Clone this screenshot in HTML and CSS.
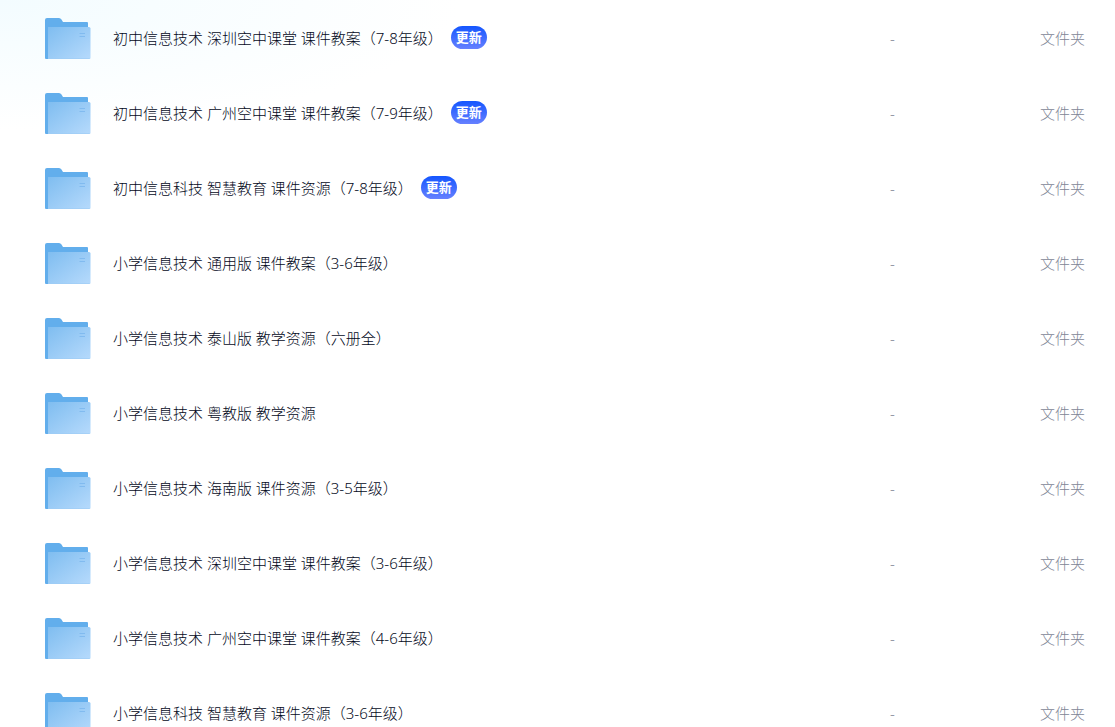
FILE: index.html
```html
<!DOCTYPE html>
<html lang="zh-CN">
<head>
    <meta charset="UTF-8">
    <meta name="viewport" content="width=device-width, initial-scale=1.0">
    <title>信息技术课件资源</title>
    <link rel="stylesheet" href="styles.css">
</head>
<body>
    <!-- shared folder icon -->
    <svg class="defs" width="0" height="0" aria-hidden="true">
        <defs>
            <linearGradient id="front" x1="0" y1="0" x2="1" y2="1">
                <stop offset="0" stop-color="#7fbdf0"/>
                <stop offset="1" stop-color="#b6dafc"/>
            </linearGradient>
        </defs>
        <symbol id="folder" viewBox="0 0 46 41">
            <path fill="#62aeec" d="M0 2Q0 0 2 0H14Q15.500 0 16.500 1.500L18 4H42Q43 4 43 5V41H1Q0 41 0 40Z"/>
            <path fill="url(#front)" d="M3 9H44Q45.500 9 45.500 10.500V39.500Q45.500 41 44 41H3Z"/>
            <path fill="#9ccbf5" fill-opacity=".6" d="M3 40H45.400Q45 41 44 41H3Z"/>
            <path stroke="#7ab7ee" stroke-opacity=".8" d="M34.500 15.500H40M34.500 18.500H40"/>
        </symbol>
    </svg>

    <table class="file-list">
        <colgroup>
            <col>
            <col class="col-size">
            <col class="col-type">
        </colgroup>
        <tbody>
            <tr>
                <td><div class="file"><svg class="icon"><use href="#folder"/></svg><a class="name" href="#">初中信息技术 深圳空中课堂 课件教案（7-8年级）</a><span class="badge">更新</span></div></td>
                <td>-</td>
                <td>文件夹</td>
            </tr>
            <tr>
                <td><div class="file"><svg class="icon"><use href="#folder"/></svg><a class="name" href="#">初中信息技术 广州空中课堂 课件教案（7-9年级）</a><span class="badge">更新</span></div></td>
                <td>-</td>
                <td>文件夹</td>
            </tr>
            <tr>
                <td><div class="file"><svg class="icon"><use href="#folder"/></svg><a class="name" href="#">初中信息科技 智慧教育 课件资源（7-8年级）</a><span class="badge">更新</span></div></td>
                <td>-</td>
                <td>文件夹</td>
            </tr>
            <tr>
                <td><div class="file"><svg class="icon"><use href="#folder"/></svg><a class="name" href="#">小学信息技术 通用版 课件教案（3-6年级）</a></div></td>
                <td>-</td>
                <td>文件夹</td>
            </tr>
            <tr>
                <td><div class="file"><svg class="icon"><use href="#folder"/></svg><a class="name" href="#">小学信息技术 泰山版 教学资源（六册全）</a></div></td>
                <td>-</td>
                <td>文件夹</td>
            </tr>
            <tr>
                <td><div class="file"><svg class="icon"><use href="#folder"/></svg><a class="name" href="#">小学信息技术 粤教版 教学资源</a></div></td>
                <td>-</td>
                <td>文件夹</td>
            </tr>
            <tr>
                <td><div class="file"><svg class="icon"><use href="#folder"/></svg><a class="name" href="#">小学信息技术 海南版 课件资源（3-5年级）</a></div></td>
                <td>-</td>
                <td>文件夹</td>
            </tr>
            <tr>
                <td><div class="file"><svg class="icon"><use href="#folder"/></svg><a class="name" href="#">小学信息技术 深圳空中课堂 课件教案（3-6年级）</a></div></td>
                <td>-</td>
                <td>文件夹</td>
            </tr>
            <tr>
                <td><div class="file"><svg class="icon"><use href="#folder"/></svg><a class="name" href="#">小学信息技术 广州空中课堂 课件教案（4-6年级）</a></div></td>
                <td>-</td>
                <td>文件夹</td>
            </tr>
            <tr>
                <td><div class="file"><svg class="icon"><use href="#folder"/></svg><a class="name" href="#">小学信息科技 智慧教育 课件资源（3-6年级）</a></div></td>
                <td>-</td>
                <td>文件夹</td>
            </tr>
        </tbody>
    </table>
</body>
</html>
```
FILE: styles.css
```css
body {
    margin: 0;
    background: radial-gradient(ellipse 460px 130px at 0 0, #f3fcff, #ffffff) no-repeat #ffffff;
    font-family: "Noto Sans", "Noto Sans CJK SC", sans-serif;
    font-size: 15px;
    font-weight: 300;
    line-height: 20px;
    color: #818596;
}
.defs {
    display: block;
}
.file-list {
    width: 100%;
    table-layout: fixed;
    border-collapse: collapse;
}
.col-size {
    width: 150px;
}
.col-type {
    width: 75px;
}
.file-list td {
    height: 75px;
    padding: 0;
}
.file {
    display: flex;
    align-items: center;
    padding-left: 45px;
}
.icon {
    width: 46px;
    height: 41px;
    margin-top: 2px;
    margin-right: 22px;
}
.name {
    color: #03081a;
    text-decoration: none;
}
.name:hover {
    color: #06a7ff;
}
.badge {
    margin-left: 8px;
    padding: 0 5px;
    border-radius: 12px;
    background: linear-gradient(#1456ff, #6680ff);
    color: #ffffff;
    font-size: 13px;
    font-weight: bold;
    line-height: 23px;
}
```
